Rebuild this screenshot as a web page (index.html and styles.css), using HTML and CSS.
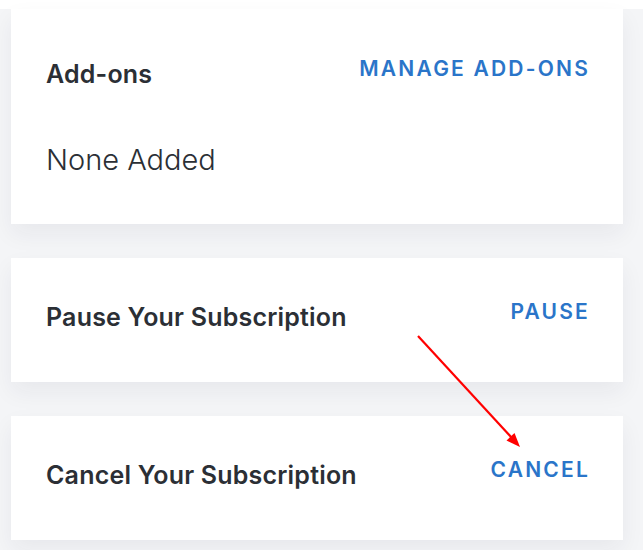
FILE: index.html
```html
<!DOCTYPE html>
<html>
<head>
    <link rel="stylesheet" href="styles.css">
</head>
<body>
    <div class="topbar"></div>
    <div class="page">
        <div class="card addons">
            <div class="card-row">
                <h3 class="card-title">Add-ons</h3>
                <a class="card-link" href="#">Manage Add-ons</a>
            </div>
            <p class="card-value">None Added</p>
        </div>
        <div class="card">
            <div class="card-row">
                <h3 class="card-title">Pause Your Subscription</h3>
                <a class="card-link" href="#">Pause</a>
            </div>
        </div>
        <div class="card">
            <div class="card-row">
                <h3 class="card-title">Cancel Your Subscription</h3>
                <a class="card-link" href="#">Cancel</a>
            </div>
        </div>

        <svg class="arrow" width="643" height="550" viewBox="0 0 643 550">
            <line x1="418" y1="336" x2="512" y2="438" stroke="#ff0000" stroke-width="2.2"/>
            <polygon points="520,447 506.5,440.5 514.5,433" fill="#ff0000"/>
        </svg>
    </div>
</body>
</html>
```

FILE: styles.css
```css
body {
    margin: 0;
    background: #f4f5f7;
    font-family: Inter, "Noto Sans", sans-serif;
    color: #2b2f35;
}
.topbar {
    height: 9px;
    background: #fff;
}
.page {
    position: relative;
    padding: 0 20px 0 11px;
}
.card {
    background: #fff;
    padding: 44px 35px 50px 35px;
    margin-bottom: 34px;
    box-shadow: 0 10px 22px rgba(30, 40, 60, 0.06);
}
.card.addons {
    padding-top: 50px;
    padding-bottom: 47px;
}
.card-row {
    display: flex;
    justify-content: space-between;
    align-items: flex-start;
}
.card-title {
    margin: 0;
    font-size: 25px;
    line-height: 30px;
    font-weight: 600;
    letter-spacing: 0.2px;
}
.card-link {
    font-size: 21px;
    line-height: 20px;
    font-weight: 600;
    letter-spacing: 2.2px;
    margin-right: -2px;
    text-transform: uppercase;
    text-decoration: none;
    color: #2a75c9;
}
.card-value {
    margin: 54px 0 0 0;
    font-size: 29px;
    line-height: 34px;
    font-weight: 350;
}
.arrow {
    position: absolute;
    left: 0;
    top: -9px;
    pointer-events: none;
}
```
